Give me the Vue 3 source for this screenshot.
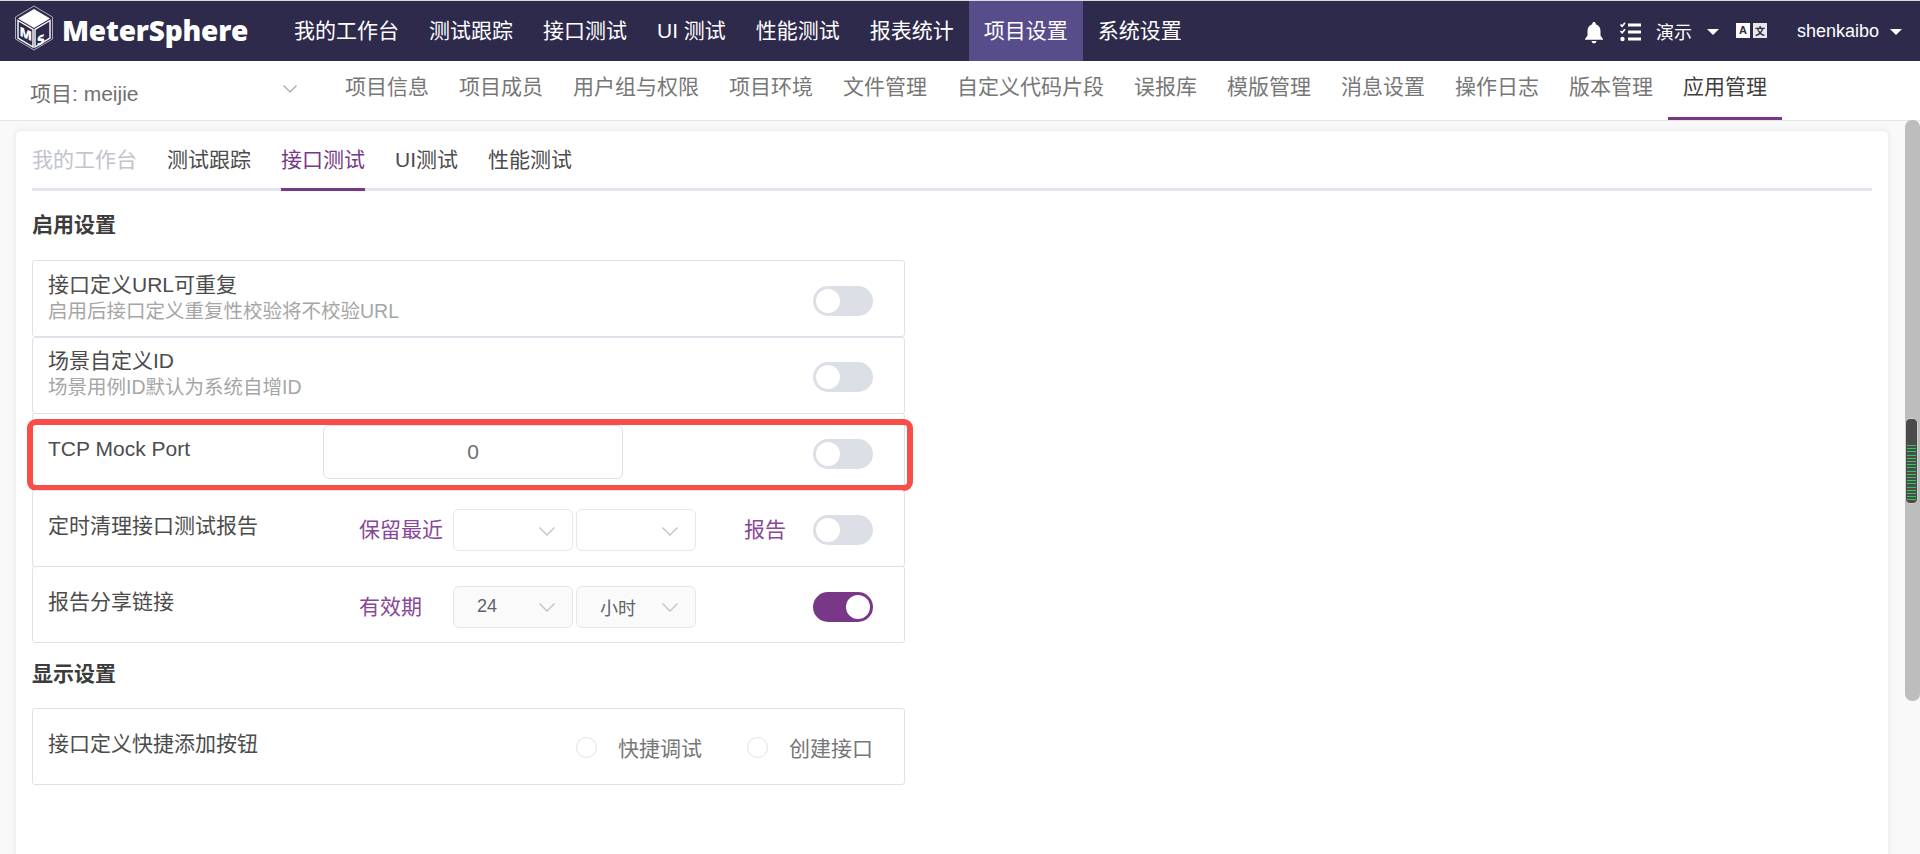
<script setup>
const mainNav = ['我的工作台', '测试跟踪', '接口测试', 'UI 测试', '性能测试', '报表统计', '项目设置', '系统设置']
const subNav = ['项目信息', '项目成员', '用户组与权限', '项目环境', '文件管理', '自定义代码片段', '误报库', '模版管理', '消息设置', '操作日志', '版本管理', '应用管理']
const tabs = ['我的工作台', '测试跟踪', '接口测试', 'UI测试', '性能测试']
</script>

<template>
  <div class="page">
    <header class="topbar">
      <div class="logo">
        <svg class="logo-icon" width="40" height="46" viewBox="0 0 40 46">
          <path d="M20 1 38.500 12v22L20 45 1.500 34V12Z" fill="none" stroke="#cfcfdc" stroke-width="0.8" />
          <path d="M20 4 36 13.500 20 23 4 13.500Z" fill="#fff" />
          <path d="M4 15.500 19 24.500V42L4 33Z" fill="#2e2a4c" stroke="#fff" stroke-width="1.400" />
          <path d="M36 15.500 21 24.500V42L36 33Z" fill="#2e2a4c" stroke="#fff" stroke-width="1.400" />
          <text x="5.500" y="31" class="logo-letter" transform="skewY(25) translate(0 -3)">M</text>
          <text x="23" y="40" class="logo-letter" transform="skewY(-25) translate(0 12)">S</text>
        </svg>
        <span class="logo-text">MeterSphere</span>
      </div>
      <nav class="main-nav">
        <a v-for="item in mainNav" :key="item" class="main-item" :class="{ active: item === '项目设置' }">{{ item }}</a>
      </nav>
      <div class="top-right">
        <svg class="bell" width="18" height="22" viewBox="0 0 18 22">
          <path d="M9 0c1 0 1.700.7 1.700 1.700v.6C13.800 3.100 15.500 5.700 15.500 9v4.500L18 17v.8H0V17l2.500-3.500V9c0-3.300 1.700-5.900 4.800-6.700v-.6C7.300.7 8 0 9 0Z" fill="#fff" />
          <path d="M6.500 19h5a2.500 2.500 0 0 1-5 0Z" fill="#fff" />
        </svg>
        <svg class="todo" width="21" height="20" viewBox="0 0 21 20">
          <path d="M.5 2.500 2.200 4.200 5 .8M.5 9 2.200 10.700 5 7.300" fill="none" stroke="#fff" stroke-width="1.700" />
          <circle cx="2.500" cy="17" r="2.200" fill="#fff" />
          <path d="M8 3h13M8 10h13M8 17h13" stroke="#fff" stroke-width="2.800" />
        </svg>
        <span class="top-text lang">演示</span>
        <i class="caret caret-a"></i>
        <span class="trans">
          <b>A</b>
          <b class="zh">文</b>
        </span>
        <span class="top-text user">shenkaibo</span>
        <i class="caret caret-b"></i>
      </div>
    </header>

    <div class="subbar">
      <div class="project">
        <span>项目: meijie</span>
        <svg width="14" height="8" viewBox="0 0 14 8"><path d="M.5.5 7 7 13.500.5" fill="none" stroke="#a0a4ac" stroke-width="1.200" /></svg>
      </div>
      <nav class="sub-nav">
        <a v-for="item in subNav" :key="item" class="sub-item" :class="{ active: item === '应用管理' }">{{ item }}</a>
      </nav>
    </div>

    <main class="main">
      <section class="card">
        <div class="tabs">
          <a v-for="t in tabs" :key="t" class="tab" :class="{ active: t === '接口测试', disabled: t === '我的工作台' }">{{ t }}</a>
        </div>

        <h3 class="title first">启用设置</h3>
        <div class="group">
          <div class="row">
            <div class="label two">
              <div>接口定义URL可重复</div>
              <div class="hint">启用后接口定义重复性校验将不校验URL</div>
            </div>
            <span class="switch"><i></i></span>
          </div>
          <div class="row">
            <div class="label two">
              <div>场景自定义ID</div>
              <div class="hint">场景用例ID默认为系统自增ID</div>
            </div>
            <span class="switch"><i></i></span>
          </div>
          <div class="row marked">
            <div class="label">TCP Mock Port</div>
            <div class="port">0</div>
            <span class="switch"><i></i></span>
            <div class="mark"></div>
          </div>
          <div class="row">
            <div class="label">定时清理接口测试报告</div>
            <span class="accent lead">保留最近</span>
            <div class="select"><span></span><svg width="16" height="9" viewBox="0 0 16 9"><path d="M.5.5 8 8 15.500.5" fill="none" stroke="#c0c3cc" stroke-width="1.400" /></svg></div>
            <div class="select"><span></span><svg width="16" height="9" viewBox="0 0 16 9"><path d="M.5.5 8 8 15.500.5" fill="none" stroke="#c0c3cc" stroke-width="1.400" /></svg></div>
            <span class="accent tail">报告</span>
            <span class="switch"><i></i></span>
          </div>
          <div class="row">
            <div class="label">报告分享链接</div>
            <span class="accent lead">有效期</span>
            <div class="select filled"><span>24</span><svg width="16" height="9" viewBox="0 0 16 9"><path d="M.5.5 8 8 15.500.5" fill="none" stroke="#c0c3cc" stroke-width="1.400" /></svg></div>
            <div class="select filled"><span>小时</span><svg width="16" height="9" viewBox="0 0 16 9"><path d="M.5.5 8 8 15.500.5" fill="none" stroke="#c0c3cc" stroke-width="1.400" /></svg></div>
            <span class="switch on"><i></i></span>
          </div>
        </div>

        <h3 class="title second">显示设置</h3>
        <div class="group">
          <div class="row">
            <div class="label">接口定义快捷添加按钮</div>
            <div class="radios">
              <label class="radio"><i></i><span>快捷调试</span></label>
              <label class="radio"><i></i><span>创建接口</span></label>
            </div>
          </div>
        </div>
      </section>

      <div class="scroll-track">
        <div class="scroll-thumb"><div class="scroll-lines"></div></div>
      </div>
    </main>
  </div>
</template>

<style>
html, body { margin: 0; height: 100%; overflow: hidden; background: #fff; }
</style>

<style scoped>
.page {
  height: 854px;
  display: flex;
  flex-direction: column;
  overflow: hidden;
  font-family: "Liberation Sans", "Noto Sans CJK SC", sans-serif;
  font-size: 21px;
  color: #333;
  border-top: 1px solid #dcdcdc;
  box-sizing: border-box;
}
a { text-decoration: none; }

/* top bar */
.topbar {
  height: 60px;
  flex: none;
  background: #2e2a4c;
  display: flex;
  align-items: stretch;
  color: #fff;
}
.logo {
  width: 279px;
  flex: none;
  display: flex;
  align-items: center;
  padding-left: 14px;
  box-sizing: border-box;
}
.logo-icon { flex: none; margin-top: -6px; }
.logo-letter { font: 900 13px "Open Sans", sans-serif; fill: #fff; }
.logo-text {
  margin-left: 8px;
  font: 800 28px/1 "Open Sans", sans-serif;
  letter-spacing: -0.2px;
  color: #fff;
  margin-top: -2px;
}
.main-nav { display: flex; }
.main-item {
  padding: 0 15px;
  line-height: 60px;
  color: #fff;
  white-space: nowrap;
}
.main-item.active { background: #584d8b; }
.top-right {
  margin-left: auto;
  display: flex;
  align-items: center;
  padding-right: 18px;
}
.bell { margin-right: 17px; margin-top: 4px; }
.todo { margin-right: 15px; margin-top: 2px; }
.top-text { font-size: 18px; color: #fff; }
.caret {
  width: 0;
  height: 0;
  border-left: 6px solid transparent;
  border-right: 6px solid transparent;
  border-top: 6px solid #fff;
}
.caret-a { margin-left: 15px; margin-right: 17px; margin-top: 2px; }
.caret-b { margin-left: 11px; margin-top: 2px; }
.trans { display: flex; gap: 3px; margin-right: 30px; margin-top: -2px; }
.trans b {
  width: 14px;
  height: 15px;
  background: #fff;
  color: #2e2a4c;
  font: 700 11px/15px "Liberation Sans", sans-serif;
  text-align: center;
}
.trans b.zh { font: 700 10px/15px "Noto Sans CJK SC", sans-serif; background: #e8e8ec; }

/* sub bar */
.subbar {
  height: 60px;
  flex: none;
  display: flex;
  background: #fff;
  border-bottom: 1px solid #e6e6e6;
  box-sizing: border-box;
}
.project {
  width: 330px;
  flex: none;
  box-sizing: border-box;
  padding: 0 33px 0 30px;
  display: flex;
  align-items: center;
  justify-content: space-between;
  color: #707070;
}
.project span { margin-top: 2px; }
.project svg { margin-top: -4px; }
.sub-nav { display: flex; }
.sub-item {
  padding: 0 15px;
  line-height: 52px;
  height: 59px;
  box-sizing: border-box;
  color: #777;
  white-space: nowrap;
}
.sub-item.active { color: #404040; border-bottom: 3px solid #783887; }

/* main */
.main {
  position: relative;
  flex: 1;
  min-height: 0;
  background: #f9f9fa;
  padding: 9px 31px 0 15px;
  display: flex;
}
.card {
  flex: 1;
  margin-bottom: -20px;
  padding: 2px 16px 0 16px;
  background: #fff;
  border: 1px solid #f0f0f2;
  border-radius: 6px;
  box-shadow: 0 0 8px rgba(0, 0, 0, .05);
  box-sizing: border-box;
}
.tabs {
  display: flex;
  gap: 30px;
  border-bottom: 3px solid #e4e4ee;
  height: 55px;
}
.tab {
  height: 58px;
  line-height: 54px;
  box-sizing: border-box;
  color: #4c4c4c;
}
.tab.disabled { color: #c0c4cc; }
.tab.active { color: #783887; border-bottom: 3px solid #783887; }
.title {
  margin: 0;
  font-size: 21px;
  line-height: 30px;
  font-weight: 700;
  color: #3c3c3c;
}
.title.first { margin: 19px 0 20px; }
.title.second { margin: 16px 0 19px; }
.group { width: 873px; }
.row {
  position: relative;
  height: 77px;
  box-sizing: border-box;
  display: flex;
  align-items: center;
  padding: 0 31px 0 15px;
  border: 1px solid #e0e0e8;
  border-radius: 3px;
  margin-top: -0.5px;
  color: #4c4c4c;
}
.row:first-child { margin-top: 0; }
.label { width: 275px; flex: none; margin-bottom: 6px; white-space: nowrap; line-height: 27px; }
.label.two { margin-bottom: 2px; }
.hint { font-size: 19.500px; color: #a6a6a6; }
.switch {
  margin-left: auto;
  margin-top: 4px;
  width: 60px;
  height: 30px;
  flex: none;
  border-radius: 15px;
  background: #dcdfe6;
  box-sizing: border-box;
  padding: 3px;
  display: flex;
}
.switch i { width: 24px; height: 24px; border-radius: 50%; background: #fff; }
.switch.on { background: #783887; justify-content: flex-end; }
.port {
  width: 300px;
  height: 54px;
  flex: none;
  box-sizing: border-box;
  border: 1px solid #dcdfe6;
  border-radius: 6px;
  text-align: center;
  line-height: 52px;
  color: #707070;
  background: #fff;
}
.mark {
  position: absolute;
  left: -6px;
  top: 5px;
  width: 886px;
  height: 72px;
  box-sizing: border-box;
  border: 6px solid #f94d48;
  border-radius: 9px;
  pointer-events: none;
}
.accent { color: #87479a; }
.lead { margin-left: 36px; width: 94px; flex: none; white-space: nowrap; }
.tail { margin-left: 48px; white-space: nowrap; margin-top: 0; }
.select {
  width: 120px;
  height: 42px;
  flex: none;
  box-sizing: border-box;
  margin-top: 4px;
  margin-right: 3px;
  border: 1px solid #e4e7ed;
  border-radius: 6px;
  display: flex;
  align-items: center;
  justify-content: space-between;
  padding: 0 17px 0 23px;
  font-size: 18px;
  color: #606266;
}
.select + .select { margin-right: 0; }
.select svg { margin-top: 2px; }
.select.filled { background: #fafafa; }
.radios { margin-left: auto; display: flex; gap: 45px; margin-top: 1px; }
.radio { display: flex; align-items: center; gap: 21px; color: #777; }
.radio i {
  width: 21px;
  height: 21px;
  box-sizing: border-box;
  border: 1px solid #e0e0e8;
  border-radius: 50%;
  background: #fff;
}

/* scrollbar */
.scroll-track {
  position: absolute;
  right: 0;
  top: -1px;
  width: 15px;
  height: 581px;
  background: #bdbdbd;
  border-radius: 7px;
}
.scroll-thumb {
  position: absolute;
  left: 0;
  top: 298px;
  width: 13px;
  height: 86px;
  box-sizing: border-box;
  background: #4b4b4b;
  border: 1px solid #d0d0d0;
  border-radius: 5px;
  padding: 26px 1px 2px;
}
.scroll-lines {
  height: 100%;
  background: repeating-linear-gradient(#2fc85a 0 1px, #4b4b4b 1px 3.200px);
}
</style>
